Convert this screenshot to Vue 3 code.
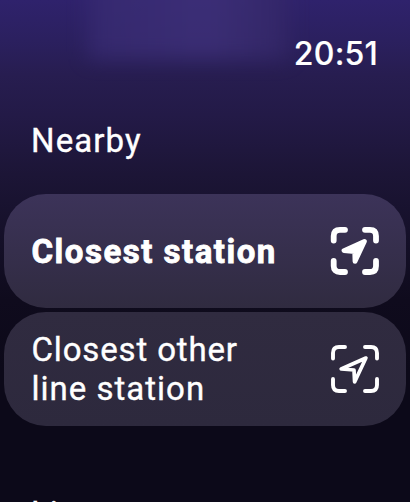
<script setup>
const items = [
  { lines: ['Closest station'], active: true },
  { lines: ['Closest other', 'line station'], active: false },
]
</script>

<template>
  <main class="screen">
    <header class="status"><time class="clock">20:51</time></header>
    <h2 class="heading nearby">Nearby</h2>
    <div class="list">
      <button v-for="item in items" :key="item.lines[0]" class="card" :class="{ active: item.active }">
        <span class="label">
          <span v-for="line in item.lines" :key="line" class="line">{{ line }}</span>
        </span>
        <svg v-if="item.active" class="icon" viewBox="0 0 50 50" fill="none" stroke="#fff" stroke-width="5.8" stroke-linecap="round" stroke-linejoin="round">
          <path d="M3.7 14.5V10Q3.7 3.8 10 3.8H15M35 3.8H40Q46 3.8 46 10V14.5M46 35V40Q46 46 40 46H35M15 46H10Q3.7 46 3.7 40V35" />
          <path d="M34.4 15.4L14 24.6L24.7 25.6L25 35.4Z" fill="#fff" stroke-width="4.8" />
        </svg>
        <svg v-else class="icon" viewBox="0 0 50 50" fill="none" stroke="#fff" stroke-width="3.9" stroke-linecap="round" stroke-linejoin="round">
          <path d="M3 14.5V9Q3 3 9 3H15M35 3H41Q47 3 47 9V14.5M47 35V41Q47 47 41 47H35M15 47H9Q3 47 3 41V35" />
          <path d="M35.9 14L11.2 25L24 26L24.6 38Z" stroke-width="3.7" />
        </svg>
      </button>
    </div>
    <h2 class="heading lines">Lines</h2>
  </main>
</template>

<style>
body {
  margin: 0;
  overflow: hidden;
}
</style>

<style scoped>
.screen {
  position: relative;
  box-sizing: border-box;
  width: 410px;
  height: 502px;
  overflow: hidden;
  color: #fff;
  font-family: Roboto, sans-serif;
  font-size: 33px;
  -webkit-text-stroke: 0.35px #fff;
  background: linear-gradient(180deg, #2f226c 0, #2b205f 40px, #271d50 75px, #231a47 115px, #1c1536 175px, #151029 235px, #0f0b1d 300px, #0c0919 370px, #0c0919 502px);
}
.screen::before {
  content: '';
  position: absolute;
  left: 88px;
  top: -40px;
  width: 200px;
  height: 99px;
  background: linear-gradient(90deg, #382b72, #40327b 60%, #352868);
  opacity: 0.75;
  filter: blur(10px);
}
.status {
  position: relative;
  display: flex;
  justify-content: flex-end;
  height: 74px;
  padding: 34px 32px 0 0;
  box-sizing: border-box;
}
.clock {
  font: 500 32px/40px Inter, sans-serif;
  letter-spacing: 0.2px;
  -webkit-text-stroke: 0.15px #fff;
}
.heading {
  margin: 0;
  padding-left: 31px;
  font-size: 33px;
  font-weight: 400;
  line-height: 40px;
  letter-spacing: 1.1px;
}
.nearby {
  margin-top: 47px;
}
.list {
  display: flex;
  flex-direction: column;
  gap: 4px;
  padding: 33px 4px 0;
}
.card {
  display: flex;
  align-items: center;
  justify-content: space-between;
  box-sizing: border-box;
  height: 114px;
  padding: 0 26px 0 27.5px;
  border: 0;
  border-radius: 42px;
  color: inherit;
  font: inherit;
  text-align: left;
  background: linear-gradient(#302b40, #2d293d);
}
.card.active {
  background: linear-gradient(#3c3359, #302b40);
}
.label {
  line-height: 39px;
  letter-spacing: 0.85px;
}
.line + .line {
  letter-spacing: 1px;
}
.active .label {
  font-weight: 700;
  letter-spacing: 1.5px;
  -webkit-text-stroke: 0.8px #fff;
}
.line {
  display: block;
}
.icon {
  flex: none;
  width: 50px;
  height: 50px;
}
.lines {
  margin-top: 68px;
}
</style>
